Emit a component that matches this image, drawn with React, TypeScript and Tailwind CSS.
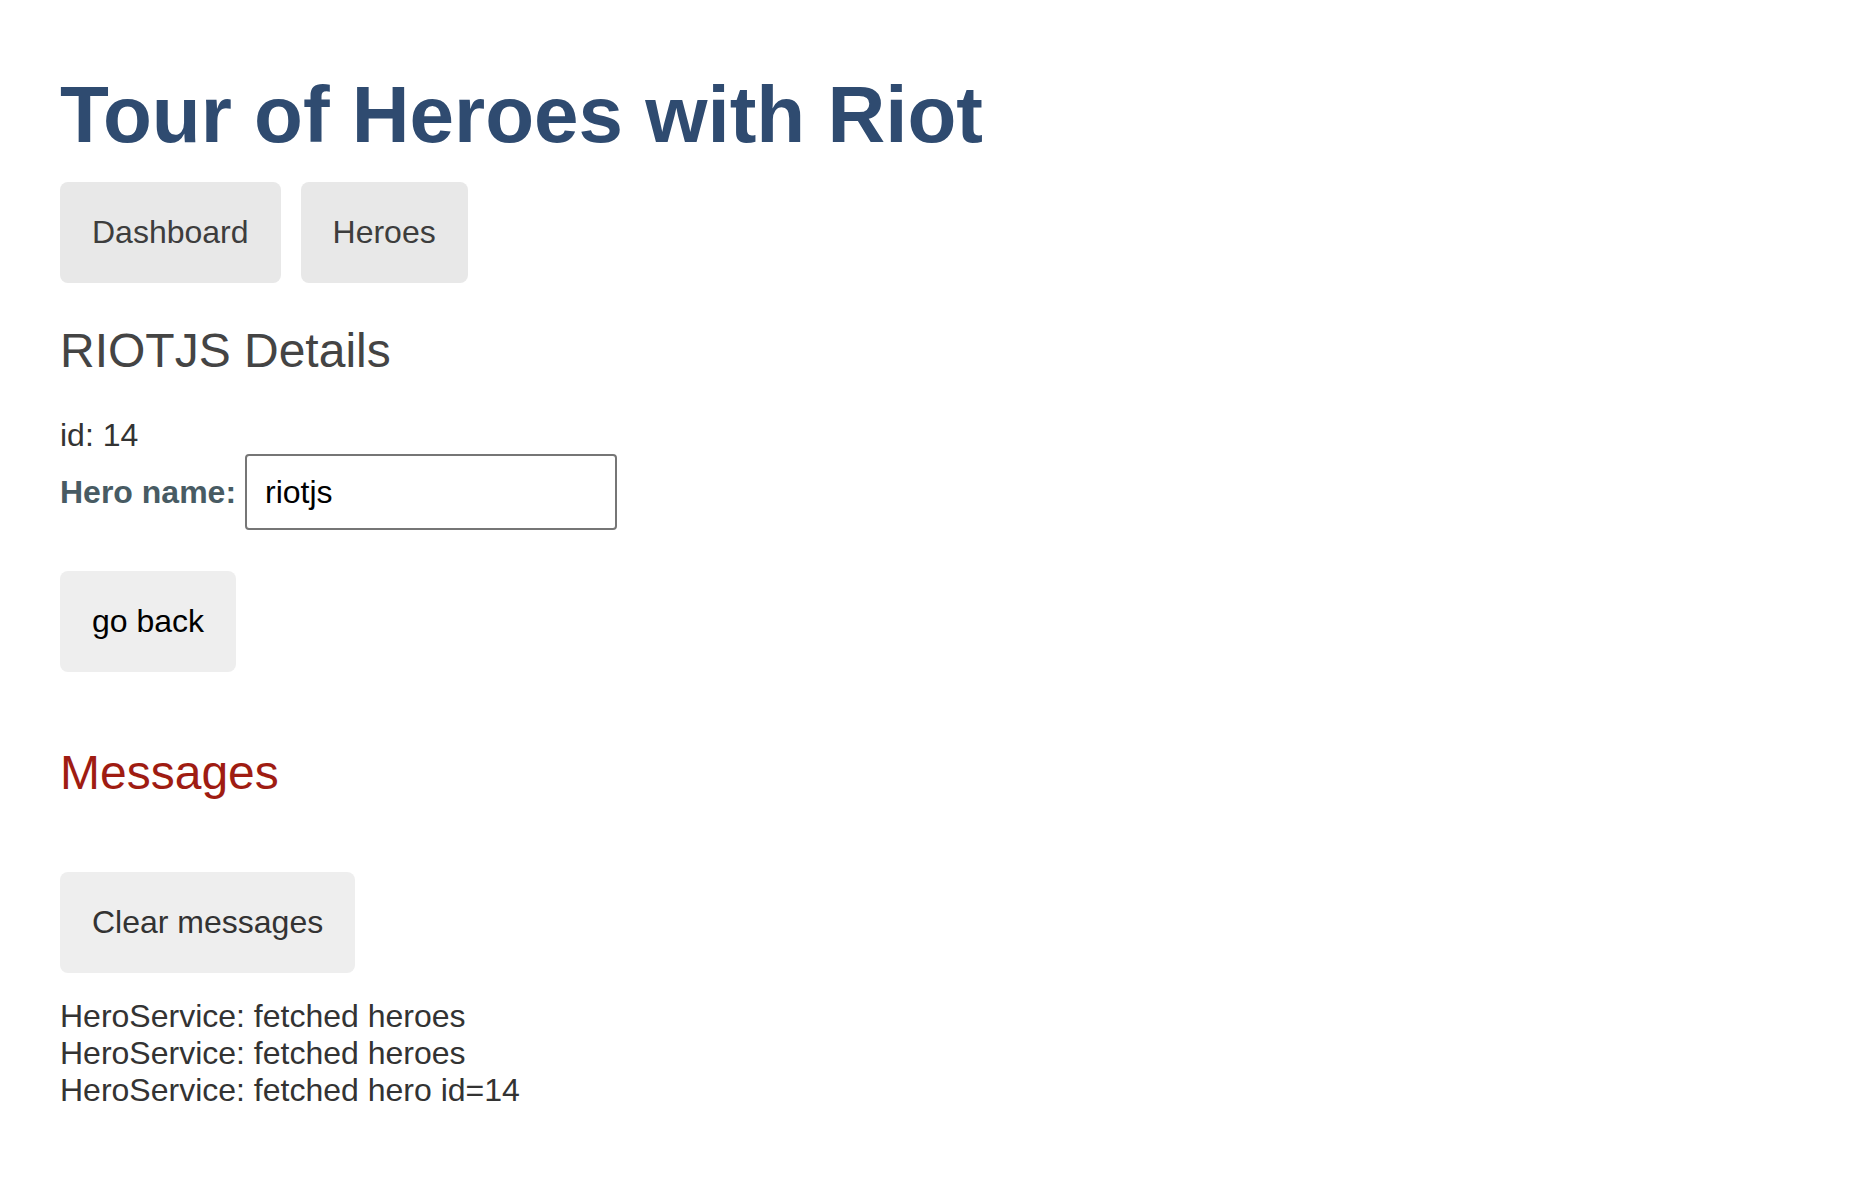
import { useState } from 'react';

const navLinks = ['Dashboard', 'Heroes'];

export default function App() {
  const [name, setName] = useState('riotjs');
  const [messages, setMessages] = useState([
    'HeroService: fetched heroes',
    'HeroService: fetched heroes',
    'HeroService: fetched hero id=14',
  ]);

  return (
    <div className="min-h-screen bg-white px-[60px] pt-[69px] font-['Liberation_Sans',Arial,sans-serif] text-[32px] leading-[37px] text-[#333]">
      <div className="flex flex-col items-start">
        <h1 className="text-[80px] font-bold leading-[92px] text-[#2f4b70]">Tour of Heroes with Riot</h1>

        <nav className="mt-[21px] flex gap-[20px]">
          {navLinks.map((link) => (
            <a
              key={link}
              href="#"
              className="flex h-[101px] items-center rounded-[8px] bg-[#e8e8e8] px-[32px] text-[#3d3d3d]"
            >
              {link}
            </a>
          ))}
        </nav>

        <h2 className="mt-[40px] text-[48px] leading-[55px] text-[#444]">{name.toUpperCase()} Details</h2>
        <div className="mt-[39px]">id: 14</div>
        <div className="flex items-center">
          <label htmlFor="hero-name" className="mr-[9px] font-bold text-[#485b63]">
            Hero name:
          </label>
          <input
            id="hero-name"
            value={name}
            onChange={(e) => setName(e.target.value)}
            className="h-[76px] w-[372px] rounded-[4px] border-2 border-[#767676] bg-white px-[18px] text-[32px] text-black outline-none"
          />
        </div>

        <button className="mt-[41px] h-[101px] rounded-[8px] bg-[#eee] px-[32px] text-black">go back</button>

        <h2 className="mt-[73px] text-[48px] leading-[55px] text-[#9f1c12]">Messages</h2>
        <button
          onClick={() => setMessages([])}
          className="mt-[72px] h-[101px] rounded-[8px] bg-[#eee] px-[32px] text-[#333]"
        >
          Clear messages
        </button>
        <div className="mt-[25px]">
          {messages.map((m, i) => (
            <div key={i}>{m}</div>
          ))}
        </div>
      </div>
    </div>
  );
}
